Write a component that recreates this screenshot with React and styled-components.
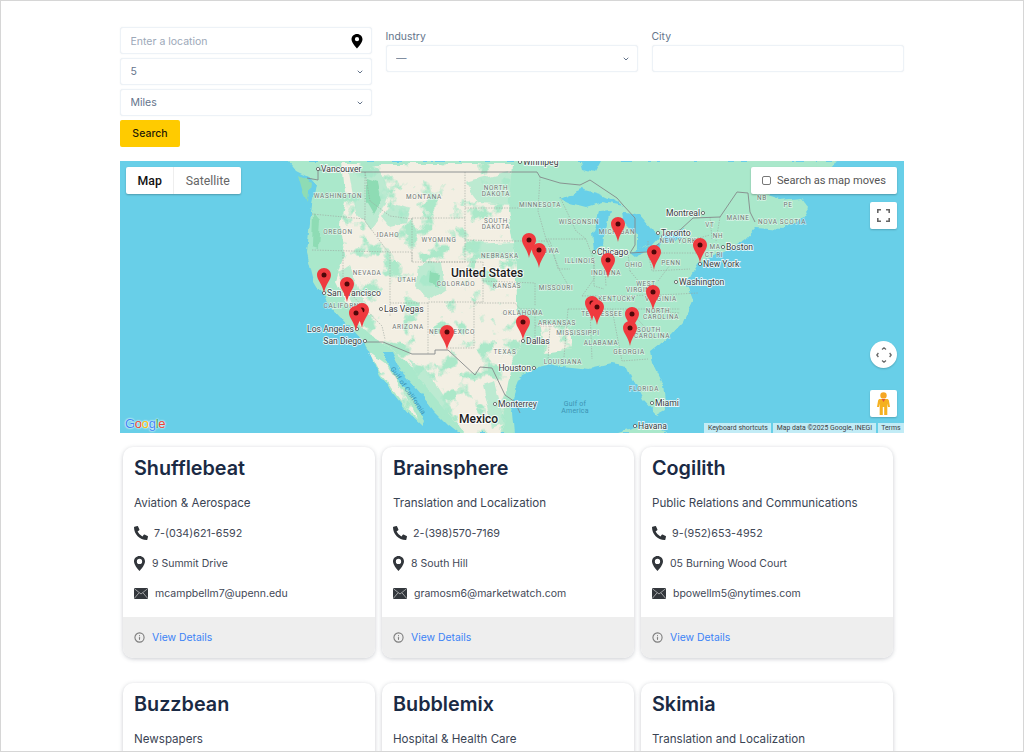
import React from 'react'
import styled, { createGlobalStyle } from 'styled-components'
import { ChevronDown, Info } from 'lucide-react'
import { FaPhoneAlt } from 'react-icons/fa'

const GlobalStyle = createGlobalStyle`
  html, body { margin: 0; padding: 0; background: #fff; }
  body { font-family: Inter, "Liberation Sans", sans-serif; }
  * { box-sizing: border-box; }
`

const Frame = styled.div`
  height: 752px;
  overflow: hidden;
  border: 1px solid #d6d6d6;
  padding: 26px 119px 0;
`

const Form = styled.form`
  display: grid;
  grid-template-columns: repeat(3, 252px);
  column-gap: 14px;
  align-items: start;
  margin-bottom: 14px;
`

const Stack = styled.div`
  display: flex;
  flex-direction: column;
  gap: 4px;
`

const Field = styled.div`
  display: flex;
  flex-direction: column;
  gap: 1px;
  padding-top: 2px;
  margin-left: -0.5px;
`

const Label = styled.label`
  font-size: 10.4px;
  line-height: 15px;
  color: #64748b;
`

const Control = styled.div`
  position: relative;
  height: 27px;
  background: #fff;
  border: 1px solid #edf2f7;
  border-radius: 3px;
  box-shadow: 0 0 1px rgba(148, 163, 184, 0.25);
`

const TextInput = styled.input`
  display: block;
  width: 100%;
  height: 100%;
  border: 0;
  outline: 0;
  background: transparent;
  padding: 1px 9.500px 0;
  font: 400 10.5px Inter, sans-serif;
  color: #64748b;
  &::placeholder { color: #9ca8b8; }
`

const SelectBox = styled.select`
  appearance: none;
  display: block;
  width: 100%;
  height: 100%;
  border: 0;
  outline: 0;
  background: transparent;
  padding: 0 9.500px;
  font: 400 10.5px Inter, sans-serif;
  color: #64748b;
`

const Chevron = styled(ChevronDown)`
  position: absolute;
  right: 7px;
  top: 9px;
  width: 8px;
  height: 8px;
  color: #64748b;
  stroke-width: 3;
  pointer-events: none;
`

const InputPin = styled.svg`
  position: absolute;
  right: 7px;
  top: 5px;
  width: 14px;
  height: 16px;
`

const SearchButton = styled.button`
  width: 60px;
  height: 27px;
  border: 0;
  border-radius: 2px;
  background: #ffcb00;
  color: #1f1a05;
  font: 500 10.5px Inter, sans-serif;
`

const MapWrap = styled.div`
  position: relative;
  width: 784px;
  height: 272px;
  overflow: hidden;
  background: #68cfe8;
  font-family: Roboto, sans-serif;
`

const MapArt = styled.svg`
  display: block;
  width: 784px;
  height: 272px;
`

const MapPanel = styled.div`
  position: absolute;
  top: ${p => p.$top}px;
  ${p => (p.$left !== undefined ? `left: ${p.$left}px;` : `right: ${p.$right}px;`)}
  background: #fff;
  border-radius: 2px;
  box-shadow: 0 1px 2px rgba(0, 0, 0, 0.25);
  display: flex;
  align-items: center;
  height: 27px;
`

const MapTab = styled.div`
  height: 100%;
  display: flex;
  align-items: center;
  padding: 0 11.500px;
  font-size: 12.3px;
  font-weight: ${p => (p.$active ? 500 : 400)};
  color: ${p => (p.$active ? '#111' : '#666')};
  & + & { border-left: 1px solid #eee; }
`

const MoveCheck = styled.label`
  display: flex;
  align-items: center;
  gap: 6px;
  width: 146px;
  padding-left: 11px;
  font-size: 11.1px;
  color: #555;
`

const CheckBox = styled.span`
  width: 9px;
  height: 9px;
  border: 1px solid #777;
  border-radius: 2px;
`

const SquareButton = styled.div`
  position: absolute;
  right: 7px;
  top: ${p => p.$top}px;
  width: 27px;
  height: 27px;
  background: #fff;
  border-radius: ${p => (p.$round ? '50%' : '2px')};
  box-shadow: 0 1px 2px rgba(0, 0, 0, 0.2);
  display: flex;
  align-items: center;
  justify-content: center;
`

const Marker = styled.svg`
  position: absolute;
  left: ${p => p.$x - 7}px;
  top: ${p => p.$y - 25}px;
  width: 14px;
  height: 25px;
`

const GoogleLogo = styled.div`
  position: absolute;
  left: 5px;
  bottom: 2px;
  font: 500 13px "Liberation Sans", sans-serif;
  letter-spacing: -0.3px;
  text-shadow: 0 0 2px #fff, 0 0 2px #fff;
`

const LogoLetter = styled.span`
  color: ${p => p.$color};
`

const Attribution = styled.div`
  position: absolute;
  right: 0;
  bottom: 0;
  height: 10px;
  display: flex;
  gap: 2px;
`

const AttributionItem = styled.span`
  background: rgba(255, 255, 255, 0.6);
  padding: 0 3.500px;
  font-size: 6.9px;
  line-height: 10px;
  color: #3c4043;
  white-space: nowrap;
`

const CardGrid = styled.div`
  display: grid;
  grid-template-columns: repeat(3, 252px);
  column-gap: 7px;
  row-gap: 25px;
  padding: 14px 0 0 3px;
`

const Card = styled.article`
  height: 211px;
  display: flex;
  flex-direction: column;
  background: #fff;
  border-radius: 10px;
  overflow: hidden;
  box-shadow: 0 1px 4px rgba(60, 70, 85, 0.28);
`

const CardBody = styled.div`
  flex: 1;
  padding: 8px 11px 0;
`

const CardTitle = styled.h3`
  margin: 0;
  font-size: 19.8px;
  line-height: 26px;
  font-weight: 600;
  color: #1a2a44;
`

const Industry = styled.p`
  margin: 14px 0 0;
  font-size: 11.6px;
  line-height: 16px;
  color: #3a4454;
`

const InfoRow = styled.div`
  display: flex;
  align-items: center;
  gap: ${p => p.$gap}px;
  margin-top: 14px;
  height: 16px;
  font-size: ${p => p.$size || 10.5}px;
  color: #3f4856;
`

const PhoneIcon = styled(FaPhoneAlt)`
  width: 14px;
  height: 14px;
  color: #2f3338;
`

const SmallIcon = styled.svg`
  display: block;
  flex: none;
`

const CardFooter = styled.div`
  height: 41px;
  flex: none;
  display: flex;
  align-items: center;
  gap: 7px;
  padding: 0 11px;
  background: #eeeeee;
`

const FooterInfo = styled(Info)`
  width: 11px;
  height: 11px;
  color: #7d7d7d;
  stroke-width: 2.4;
`

const DetailsLink = styled.a`
  font-size: 10.4px;
  color: #3b82f6;
  text-decoration: none;
`

const GREEN = '#aae8cb'
const WATER = '#68cfe8'
const BEIGE = '#f3efe3'

const LAND = 'M168,0 L176,10 L190,17 L196,24 L192,45 L189,70 L187,92 L194,120 L206,140 L220,155 L232,168 L243,180 L250,190 L258,212 L272,232 L288,252 L303,266 L305,260 L293,238 L278,217 L265,198 L263,190 L272,190 L282,211 L302,234 L315,251 L328,264 L338,272 L394,272 L392,250 L396,228 L402,213 L414,208 L432,204 L452,206 L470,208 L492,203 L508,206 L514,220 L523,238 L537,253 L546,248 L543,224 L532,201 L530,190 L548,176 L563,160 L573,138 L567,122 L578,102 L597,94 L610,89 L623,80 L636,66 L662,68 L684,57 L690,48 L680,36 L660,38 L648,34 L660,16 L690,10 L722,0 Z'

const BEIGE_AREAS = [
  'M222,3 L392,3 L388,50 L396,100 L396,145 L404,175 L392,205 L386,240 L382,272 L345,272 L308,228 L284,198 L264,182 L246,172 L228,145 L216,120 L224,95 L220,65 L226,40 Z',
  'M250,192 L262,215 L285,245 L298,258 L285,232 L268,205 Z',
  'M420,160 L452,168 L452,188 L425,192 Z',
]

const FOREST = [
  'M228,6 L258,6 L270,30 L260,55 L250,68 L236,52 Z',
  'M272,42 L290,48 L286,62 L270,66 L262,56 Z',
  'M298,104 L322,100 L326,128 L308,140 L296,125 Z',
  'M218,112 L230,104 L248,150 L240,158 Z',
  'M345,22 L392,10 L392,44 L360,42 Z',
  'M350,84 L396,82 L392,98 L356,98 Z',
  'M288,198 L306,210 L332,250 L322,254 L298,226 Z',
  'M362,224 L374,220 L386,262 L372,268 Z',
]

const DARK_FOREST = [
  'M246,18 L258,22 L262,40 L254,54 L246,40 Z',
  'M178,14 L190,20 L188,42 L182,28 Z',
  'M311,110 L320,112 L318,126 L310,122 Z',
  'M193,52 L200,60 L198,88 L192,86 Z',
]

const LAKES = [
  'M440,37 L462,28 L480,33 L505,45 L482,41 L466,46 L450,42 Z',
  'M478,52 L490,51 L486,66 L484,84 L474,90 L472,72 Z',
  'M503,50 L520,54 L538,75 L530,84 L516,90 L516,74 L505,62 Z',
  'M510,92 L540,81 L538,88 L516,97 Z',
  'M540,75 L564,68 L562,76 L546,81 Z',
  'M462,0 L480,0 L474,11 L464,8 Z',
]

const ISLANDS = [
  'M498,272 L515,267 L534,266 L548,272 Z',
  'M655,38 L676,40 L688,50 L668,54 L652,48 Z',
  'M697,0 L716,0 L706,12 L696,8 Z',
]

const BORDERS = [
  'M187,17 L198,19 L198,9 L240,11 L417,11 L420,16 L440,22 L460,24 L470,19 L497,37 L503,44 L515,57 L515,84 L510,92 L527,91 L540,82 L542,74 L560,69 L573,57 L600,56 L617,31 L628,32 L630,51 L635,61',
  'M245,181 L263,181 L292,193 L315,193 L315,189 L328,189 L342,202 L355,214 L360,206 L372,207 L385,234 L395,241 L400,252',
]

const STATE_LINES = [
  'M192,53 L245,58', 'M245,11 L245,60 L268,91', 'M192,89 L270,91', 'M270,91 L270,155', 'M245,11 L250,40 L270,55 L292,58',
  'M292,57 L345,57 L345,101 L292,101 Z', 'M345,47 L400,47', 'M345,79 L395,80', 'M345,11 L345,57',
  'M308,101 L363,101 L363,141 L308,141 L308,193', 'M354,142 L354,187 L328,187', 'M223,91 L223,125 L262,165 L265,178',
  'M270,142 L308,142', 'M292,101 L292,91 L270,91', 'M363,120 L415,122 L415,145', 'M354,142 L395,142 L400,148 L415,148',
  'M395,80 L430,80 L438,108 L450,108', 'M420,16 L418,50 L426,78 L466,78', 'M426,78 L432,90 L440,110 L448,124 L420,124',
  'M440,36 L456,70 L466,78 L474,100 L474,118 L462,135', 'M474,96 L474,125 L484,128', 'M484,92 L486,125', 'M486,92 L508,92 L510,110',
  'M510,110 L520,122 L530,132', 'M462,135 L540,134 L578,132', 'M448,148 L560,148', 'M415,148 L415,180 L398,180', 'M415,165 L448,165',
  'M430,165 L428,200', 'M448,148 L444,196', 'M470,148 L472,198', 'M492,148 L502,200 L528,198', 'M510,150 L534,176', 'M534,150 L560,152',
  'M528,92 L576,92', 'M528,80 L528,92 L532,110 L570,108', 'M575,78 L590,74', 'M590,56 L592,78', 'M600,56 L596,80', 'M538,120 L550,104',
]

const STATES = [
  ['WASHINGTON', 218, 35], ['MONTANA', 304, 36], ['NORTH', 376, 27], ['DAKOTA', 376, 33], ['SOUTH', 376, 60], ['DAKOTA', 376, 66],
  ['OREGON', 218, 71], ['IDAHO', 268, 74], ['WYOMING', 319, 79], ['NEBRASKA', 380, 95], ['NEVADA', 247, 112], ['UTAH', 287, 119],
  ['COLORADO', 336, 123], ['KANSAS', 387, 125], ['CALIFORNIA', 225, 145], ['ARIZONA', 288, 166], ['NEW MEXICO', 332, 171],
  ['OKLAHOMA', 403, 152], ['TEXAS', 385, 191], ['MINNESOTA', 420, 44], ['WISCONSIN', 459, 61], ['MICHIGAN', 497, 71], ['IOWA', 430, 90],
  ['ILLINOIS', 460, 100], ['INDIANA', 486, 112], ['OHIO', 514, 104], ['PENN', 551, 102], ['MISSOURI', 436, 127], ['KENTUCKY', 497, 138],
  ['WEST', 526, 123], ['VIRGINIA', 522, 129], ['VIRGINIA', 541, 138], ['TENNESSEE', 482, 153], ['NORTH', 538, 150], ['CAROLINA', 541, 156],
  ['SOUTH', 529, 169], ['CAROLINA', 532, 175], ['ARKANSAS', 437, 162], ['MISSISSIPPI', 458, 172], ['ALABAMA', 481, 182], ['GEORGIA', 509, 191],
  ['LOUISIANA', 443, 201], ['FLORIDA', 524, 228], ['MAINE', 618, 57], ['VT', 590, 64], ['NH', 598, 75], ['NEW YORK', 558, 80], ['MA', 595, 86],
  ['CT RI', 594, 94], ['NB', 642, 37], ['PE', 668, 44], ['NOVA SCOTIA', 662, 61],
]

const CITIES = [
  ['Vancouver', 198, 8, 'start'], ['San Francisco', 204, 132, 'start'], ['Las Vegas', 261, 148, 'start'], ['Los Angeles', 237, 168, 'end'],
  ['San Diego', 245, 180, 'end'], ['Monterrey', 375, 243, 'start'], ['Winnipeg', 400, 1, 'start'], ['Chicago', 474, 91, 'start'],
  ['Toronto', 538, 72, 'start'], ['Montreal', 583, 52, 'end'], ['Boston', 603, 86, 'start'], ['New York', 580, 103, 'start'],
  ['Washington', 556, 121, 'start'], ['Dallas', 403, 180, 'start'], ['Houston', 414, 207, 'end'], ['Miami', 532, 242, 'start'], ['Havana', 515, 265, 'start'],
]

const MARKERS = [
  [204, 132], [227, 141], [242, 167], [236, 170], [327, 189], [409, 97], [419, 107], [498, 81], [488, 117], [534, 109],
  [580, 102], [533, 149], [472, 160], [477, 164], [512, 171], [510, 185], [403, 179],
]

const GOOGLE = [['G', '#4285f4'], ['o', '#ea4335'], ['o', '#fbbc05'], ['g', '#4285f4'], ['l', '#34a853'], ['e', '#ea4335']]

const COMPANIES = [
  { name: 'Shufflebeat', industry: 'Aviation & Aerospace', phone: '7-(034)621-6592', address: '9 Summit Drive', email: 'mcampbellm7@upenn.edu' },
  { name: 'Brainsphere', industry: 'Translation and Localization', phone: '2-(398)570-7169', address: '8 South Hill', email: 'gramosm6@marketwatch.com' },
  { name: 'Cogilith', industry: 'Public Relations and Communications', phone: '9-(952)653-4952', address: '05 Burning Wood Court', email: 'bpowellm5@nytimes.com' },
  { name: 'Buzzbean', industry: 'Newspapers' },
  { name: 'Bubblemix', industry: 'Hospital & Health Care' },
  { name: 'Skimia', industry: 'Translation and Localization' },
]

function PinGlyph() {
  return (
    <SmallIcon width="11" height="15" viewBox="0 0 20 27">
      <path
        fillRule="evenodd"
        fill="#33373c"
        d="M10 0C4.500 0 0 4.300 0 9.700 0 16.500 10 27 10 27s10-10.500 10-17.300C20 4.300 15.500 0 10 0zm0 14.500a4.800 4.800 0 1 1 0-9.600 4.800 4.800 0 0 1 0 9.600z"
      />
    </SmallIcon>
  )
}

function MailGlyph() {
  return (
    <SmallIcon width="14" height="11" viewBox="0 0 14 11">
      <rect width="14" height="11" rx="1" fill="#33373c" />
      <path d="M0.500 0.800 L7 6 L13.500 0.800 M0.500 10.200 L5 4.800 M13.500 10.200 L9 4.800" stroke="#e8e8e8" strokeWidth="0.6" fill="none" />
    </SmallIcon>
  )
}

function MapDrawing() {
  return (
    <MapArt viewBox="0 0 784 272">
      <defs>
        <filter id="rough" x="-5%" y="-5%" width="110%" height="110%" colorInterpolationFilters="sRGB">
          <feTurbulence type="fractalNoise" baseFrequency="0.07" numOctaves="3" seed="4" result="noise" />
          <feDisplacementMap in="SourceGraphic" in2="noise" scale="7" xChannelSelector="R" yChannelSelector="G" />
          <feGaussianBlur stdDeviation="0.5" />
        </filter>
        <filter id="mottle" x="0" y="0" width="100%" height="100%" colorInterpolationFilters="sRGB">
          <feTurbulence type="fractalNoise" baseFrequency="0.05" numOctaves="4" seed="9" />
          <feColorMatrix values="0 0 0 0 0.67  0 0 0 0 0.91  0 0 0 0 0.79  9 0 0 0 -5" />
          <feGaussianBlur stdDeviation="0.4" />
        </filter>
        <clipPath id="dry">
          {BEIGE_AREAS.map(d => <path key={d} d={d} />)}
        </clipPath>
      </defs>
      <rect width="784" height="272" fill={WATER} />
      <g filter="url(#rough)">
        <path d={LAND} fill={GREEN} />
        {ISLANDS.map(d => <path key={d} d={d} fill={GREEN} />)}
        {BEIGE_AREAS.map(d => <path key={d} d={d} fill={BEIGE} />)}
        <g clipPath="url(#dry)">
          <rect width="784" height="272" filter="url(#mottle)" />
        </g>
        {FOREST.map(d => <path key={d} d={d} fill={GREEN} opacity="0.75" />)}
        {DARK_FOREST.map(d => <path key={d} d={d} fill="#8edcb4" />)}
        {LAKES.map(d => <path key={d} d={d} fill={WATER} />)}
      </g>
      {STATE_LINES.map(d => (
        <path key={d} d={d} fill="none" stroke="#9aa39c" strokeWidth="0.6" strokeDasharray="1.4 1.2" />
      ))}
      {BORDERS.map(d => <path key={d} d={d} fill="none" stroke="#85898a" strokeWidth="0.9" />)}
      {STATES.map(([label, x, y]) => (
        <text
          key={label + x}
          x={x}
          y={y + 2.4}
          textAnchor="middle"
          fontSize="6.4"
          letterSpacing="0.7"
          fill="#6f7673"
          stroke="#fff"
          strokeWidth="1.4"
          strokeOpacity="0.55"
          paintOrder="stroke"
        >
          {label}
        </text>
      ))}
      {CITIES.map(([label, x, y, anchor]) => (
        <g key={label}>
          <circle cx={x} cy={y} r="1.6" fill="#fff" stroke="#555" strokeWidth="0.8" />
          <text
            x={anchor === 'start' ? x + 3 : x - 3}
            y={y + 3}
            textAnchor={anchor}
            fontSize="8.6"
            fill="#3c4043"
            stroke="#fff"
            strokeWidth="1.8"
            strokeOpacity="0.8"
            paintOrder="stroke"
          >
            {label}
          </text>
        </g>
      ))}
      <text x="331" y="116" fontSize="12" fontWeight="500" fill="#1c1c1c" stroke="#fff" strokeWidth="2" strokeOpacity="0.8" paintOrder="stroke">United States</text>
      <text x="339" y="262" fontSize="12" fontWeight="500" fill="#1c1c1c" stroke="#fff" strokeWidth="2" strokeOpacity="0.8" paintOrder="stroke">Mexico</text>
      <text x="455" y="245" textAnchor="middle" fontSize="7" letterSpacing="0.2" fill="#3d93b3">Gulf of</text>
      <text x="455" y="252" textAnchor="middle" fontSize="7" letterSpacing="0.2" fill="#3d93b3">America</text>
      <text x="270" y="208" fontSize="7" letterSpacing="0.2" fill="#3d93b3" transform="rotate(55 270 208)">Gulf of California</text>
    </MapArt>
  )
}

function MarkerPin({ x, y }) {
  return (
    <Marker $x={x} $y={y} viewBox="0 0 14 25">
      <path d="M7 0C3.100 0 0 3 0 6.900 0 12 5.600 16 7 25 8.400 16 14 12 14 6.900 14 3 10.900 0 7 0z" fill="#ef3a3f" />
      <circle cx="7" cy="7" r="2.500" fill="#4f0709" />
    </Marker>
  )
}

function MapBlock() {
  return (
    <MapWrap>
      <MapDrawing />
      {MARKERS.map(([x, y]) => <MarkerPin key={`${x}-${y}`} x={x} y={y} />)}
      <MapPanel $top={6} $left={6}>
        <MapTab $active>Map</MapTab>
        <MapTab>Satellite</MapTab>
      </MapPanel>
      <MapPanel $top={6} $right={7}>
        <MoveCheck>
          <CheckBox />
          Search as map moves
        </MoveCheck>
      </MapPanel>
      <SquareButton $top={41}>
        <svg width="13" height="13" viewBox="0 0 13 13" fill="none" stroke="#666" strokeWidth="1.6">
          <path d="M0.800 4V0.800H4M9 0.800H12.200V4M12.200 9V12.200H9M4 12.200H0.800V9" />
        </svg>
      </SquareButton>
      <SquareButton $top={180} $round>
        <svg width="16" height="16" viewBox="0 0 16 16" fill="none" stroke="#666" strokeWidth="1.3">
          <path d="M6 2.400 8 0.800 10 2.400M6 13.600 8 15.200 10 13.600M2.400 6 0.800 8 2.400 10M13.600 6 15.200 8 13.600 10" />
        </svg>
      </SquareButton>
      <SquareButton $top={229}>
        <svg width="13" height="23" viewBox="0 0 13 23">
          <circle cx="6.500" cy="3.400" r="3.200" fill="#f5a623" />
          <path d="M3 7h7c1 0 1.700.6 1.900 1.600L13 15h-2l-.7-3.600V23H7.200v-8H5.800v8H2.700V11.400L2 15H0l1.100-6.400C1.300 7.600 2 7 3 7z" fill="#f5b120" />
          <path d="M4.600 7h3.800L6.500 10z" fill="#e2553d" />
        </svg>
      </SquareButton>
      <GoogleLogo>
        {GOOGLE.map(([letter, color], i) => <LogoLetter key={i} $color={color}>{letter}</LogoLetter>)}
      </GoogleLogo>
      <Attribution>
        <AttributionItem>Keyboard shortcuts</AttributionItem>
        <AttributionItem>Map data ©2025 Google, INEGI</AttributionItem>
        <AttributionItem>Terms</AttributionItem>
      </Attribution>
    </MapWrap>
  )
}

function CompanyCard({ company }) {
  return (
    <Card>
      <CardBody>
        <CardTitle>{company.name}</CardTitle>
        <Industry>{company.industry}</Industry>
        {company.phone && (
          <>
            <InfoRow $gap={6} $size={10.75}>
              <PhoneIcon />
              {company.phone}
            </InfoRow>
            <InfoRow $gap={7}>
              <PinGlyph />
              {company.address}
            </InfoRow>
            <InfoRow $gap={7}>
              <MailGlyph />
              {company.email}
            </InfoRow>
          </>
        )}
      </CardBody>
      <CardFooter>
        <FooterInfo />
        <DetailsLink href="#">View Details</DetailsLink>
      </CardFooter>
    </Card>
  )
}

export default function App() {
  return (
    <Frame>
      <GlobalStyle />
      <Form>
        <Stack>
          <Control>
            <TextInput placeholder="Enter a location" />
            <InputPin viewBox="0 0 14 16">
              <path
                fillRule="evenodd"
                d="M7 1C3.900 1 1.500 3.400 1.500 6.300 1.500 10 7 15.500 7 15.500s5.500-5.500 5.500-9.200C12.500 3.400 10.100 1 7 1zm0 7.300a2.100 2.100 0 1 1 0-4.200 2.100 2.100 0 0 1 0 4.200z"
              />
            </InputPin>
          </Control>
          <Control>
            <SelectBox defaultValue="5">
              <option>5</option>
            </SelectBox>
            <Chevron />
          </Control>
          <Control>
            <SelectBox defaultValue="Miles">
              <option>Miles</option>
            </SelectBox>
            <Chevron />
          </Control>
          <SearchButton type="button">Search</SearchButton>
        </Stack>
        <Field>
          <Label>Industry</Label>
          <Control>
            <SelectBox defaultValue="—">
              <option>—</option>
            </SelectBox>
            <Chevron />
          </Control>
        </Field>
        <Field>
          <Label>City</Label>
          <Control>
            <TextInput />
          </Control>
        </Field>
      </Form>
      <MapBlock />
      <CardGrid>
        {COMPANIES.map(c => <CompanyCard key={c.name} company={c} />)}
      </CardGrid>
    </Frame>
  )
}
